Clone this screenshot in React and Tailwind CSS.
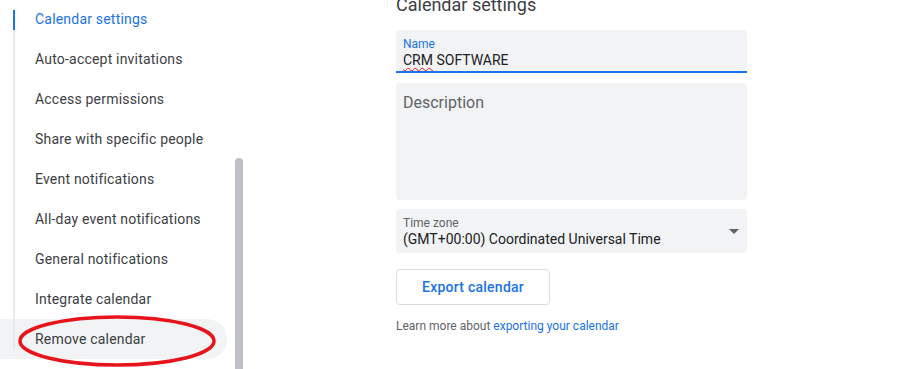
const navItems = [
  'Calendar settings',
  'Auto-accept invitations',
  'Access permissions',
  'Share with specific people',
  'Event notifications',
  'All-day event notifications',
  'General notifications',
  'Integrate calendar',
  'Remove calendar',
];

const App = () => {
  return (
    <div
      className="flex h-[369px] w-[904px] overflow-hidden bg-white text-[#3c4043]"
      style={{ fontFamily: 'Roboto, "Liberation Sans", sans-serif' }}
    >
      <div className="relative w-[235px] shrink-0">
        <div className="absolute left-[13px] top-[10px] h-[340px] w-[2px] bg-[#e8eaed]" />
        <div className="absolute left-[13px] top-[10px] h-[20px] w-[2px] bg-[#1a73e8]" />
        <div className="-mt-px">
          {navItems.map((item, i) => (
            <div
              key={item}
              className={
                'flex h-10 w-[227px] items-center rounded-r-full pl-[35px] text-[14px] tracking-[0.2px] ' +
                (i === 0 ? 'text-[#1a73e8] ' : '') +
                (i === navItems.length - 1 ? 'bg-[#f1f3f4]' : '')
              }
            >
              {item}
            </div>
          ))}
        </div>
        <svg className="pointer-events-none absolute left-0 top-[310px]" width="235" height="59">
          <ellipse cx="117" cy="31" rx="97" ry="24" fill="none" stroke="#e8141c" strokeWidth="3.5" />
        </svg>
      </div>

      <div className="mt-[158px] h-[260px] w-2 shrink-0 rounded-full bg-[#bdc1c6]" />

      <div className="ml-[153px] w-[351px] shrink-0">
        <h1 className="-mt-[9px] mb-[11px] h-[28px] text-[18px] leading-[28px] text-[#3c4043]">
          Calendar settings
        </h1>

        <div className="rounded-t-[4px] border-b-2 border-[#1a73e8] bg-[#f1f3f4] px-[7px] pb-[2px] pt-[7px]">
          <div className="text-[12px] leading-[14px] text-[#1a73e8]">Name</div>
          <div className="text-[14px] leading-[18px] text-[#202124]">
            <span className="underline decoration-[#e8141c] decoration-wavy decoration-1 underline-offset-2">CRM</span> SOFTWARE
          </div>
        </div>

        <div className="mt-[10px] h-[117px] rounded-[4px] bg-[#f1f3f4] px-[7px] pt-[8px] text-[16px] leading-[24px] text-[#5f6368]">
          Description
        </div>

        <div className="mt-[9px] flex h-[44px] items-start justify-between rounded-[4px] bg-[#f1f3f4] pl-[7px] pr-[8px] pt-[7px]">
          <div>
            <div className="text-[12px] leading-[14px] text-[#5f6368]">Time zone</div>
            <div className="text-[14px] leading-[18px] text-[#202124]">(GMT+00:00) Coordinated Universal Time</div>
          </div>
          <div className="mt-[13px] h-0 w-0 border-x-[5px] border-t-[5px] border-x-transparent border-t-[#5f6368]" />
        </div>

        <button className="mt-[16px] flex h-[36px] w-[154px] items-center justify-center rounded-[4px] border border-[#dadce0] bg-white text-[14px] font-medium tracking-[0.25px] text-[#1a73e8]">
          Export calendar
        </button>

        <div className="mt-[13px] text-[12px] leading-[16px] text-[#5f6368]">
          Learn more about <span className="text-[#1a73e8]">exporting your calendar</span>
        </div>
      </div>
    </div>
  );
};

export default App;
